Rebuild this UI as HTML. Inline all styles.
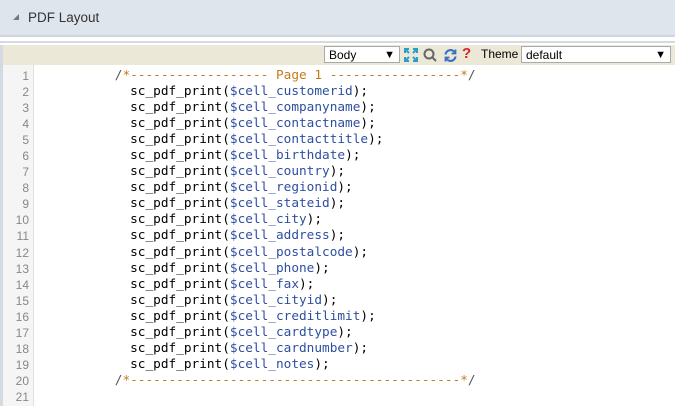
<!DOCTYPE html>
<html><head><style>
body{margin:0;width:675px;height:406px;overflow:hidden;background:#fff;font-family:"Liberation Sans",Arial,sans-serif;position:relative}
.hdr{position:absolute;left:0;top:0;width:675px;height:35px;background:#dfe5ed;border-bottom:2px solid #cfd6de}
.hdr .t{position:absolute;left:28px;top:10px;font-size:13.5px;color:#333}
.hdr .tri{position:absolute;left:13px;top:14px;width:0;height:0;border-left:6px solid transparent;border-bottom:6px solid #777}
.ln{position:absolute;left:0;top:41px;width:675px;height:2px;background:#d3dae1}
.side{position:absolute;left:0;top:45px;width:3px;height:361px;background:#d3dae1}
.tb{position:absolute;left:3px;top:45px;width:672px;height:20px;background:#ebe8d8}
.sel{position:absolute;top:46px;height:17px;border:1px solid #aaa;background:#fff;font-size:12px;line-height:16px;box-sizing:border-box;padding-left:4px;color:#000}
.sel:after{content:"▼";position:absolute;right:4px;top:0;font-size:11px}
.gut{position:absolute;left:3px;top:65px;width:30px;height:341px;background:#f5f5f5;border-right:1px solid #e0e0e0}
.nums{position:absolute;left:3px;top:68px;width:26px;text-align:right;font:12px/16.05px "Liberation Sans",sans-serif;color:#888}
pre{position:absolute;left:38px;top:68px;margin:0;font:12.75px/16.05px "DejaVu Sans Mono",monospace;color:#000}
.c{color:#c07c1c}.s{color:#555}.v{color:#2e4fa0}
</style></head><body>
<div class="hdr"><div class="tri"></div><div class="t">PDF Layout</div></div>
<div class="ln"></div>
<div class="side"></div>
<div class="tb"></div>
<div class="sel" style="left:324px;width:76px">Body</div>
<svg style="position:absolute;left:404px;top:48px" width="14" height="14" viewBox="0 0 14 14" fill="none" stroke="#2a9cc9" stroke-width="2"><path d="M1 5V1h4M9 1h4v4M13 9v4H9M5 13H1V9M2 2l3 3M12 2L9 5M12 12L9 9M2 12l3-3"/></svg>
<svg style="position:absolute;left:423px;top:48px" width="14" height="14" viewBox="0 0 14 14" fill="none" stroke="#666" stroke-width="2"><circle cx="6" cy="6" r="4.5"/><path d="M9.5 9.5L13 13"/></svg>
<svg style="position:absolute;left:443px;top:48px" width="15" height="15" viewBox="0 0 15 15" fill="none" stroke="#3a6fc4" stroke-width="2.2"><path d="M2.5 6.5A5 5 0 0 1 12 5M12.5 8.5A5 5 0 0 1 3 10"/><path d="M12.5 1.5v4h-4M2.5 13.5v-4h4" stroke-width="1.8"/></svg>
<div style="position:absolute;left:462px;top:45px;font:bold 15px 'Liberation Sans',sans-serif;color:#d9232a">?</div>
<div style="position:absolute;left:481px;top:47px;font-size:12px;color:#000">Theme</div>
<div class="sel" style="left:521px;width:150px">default</div>
<div class="gut"></div>
<div class="nums">1<br>2<br>3<br>4<br>5<br>6<br>7<br>8<br>9<br>10<br>11<br>12<br>13<br>14<br>15<br>16<br>17<br>18<br>19<br>20<br>21</div>
<pre>          <span class="s">/</span><span class="c">*------------------ Page 1 -----------------*</span><span class="s">/</span>
            sc_pdf_print(<span class="v">$cell_customerid</span>);
            sc_pdf_print(<span class="v">$cell_companyname</span>);
            sc_pdf_print(<span class="v">$cell_contactname</span>);
            sc_pdf_print(<span class="v">$cell_contacttitle</span>);
            sc_pdf_print(<span class="v">$cell_birthdate</span>);
            sc_pdf_print(<span class="v">$cell_country</span>);
            sc_pdf_print(<span class="v">$cell_regionid</span>);
            sc_pdf_print(<span class="v">$cell_stateid</span>);
            sc_pdf_print(<span class="v">$cell_city</span>);
            sc_pdf_print(<span class="v">$cell_address</span>);
            sc_pdf_print(<span class="v">$cell_postalcode</span>);
            sc_pdf_print(<span class="v">$cell_phone</span>);
            sc_pdf_print(<span class="v">$cell_fax</span>);
            sc_pdf_print(<span class="v">$cell_cityid</span>);
            sc_pdf_print(<span class="v">$cell_creditlimit</span>);
            sc_pdf_print(<span class="v">$cell_cardtype</span>);
            sc_pdf_print(<span class="v">$cell_cardnumber</span>);
            sc_pdf_print(<span class="v">$cell_notes</span>);
          <span class="s">/</span><span class="c">*-------------------------------------------*</span><span class="s">/</span>
</pre>
</body></html>
